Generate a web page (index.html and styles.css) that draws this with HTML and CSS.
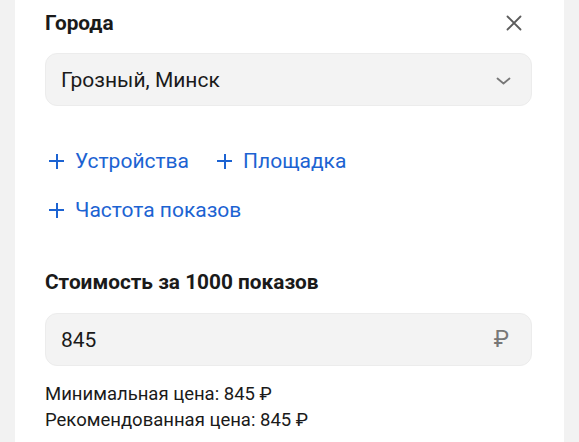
FILE: index.html
```html
<!DOCTYPE html>
<html lang="ru">
<head>
  <meta charset="UTF-8">
  <title>Таргетинг</title>
  <link rel="stylesheet" href="styles.css">
</head>
<body>
  <div class="panel">
    <!-- Cities -->
    <div class="section-head">
      <span class="section-title">Города</span>
      <button class="close-btn" aria-label="Закрыть">
        <svg width="16" height="16" viewBox="0 0 16 16"><path d="M1.5 1.5 L14.5 14.5 M14.5 1.5 L1.5 14.5" stroke="#5c5c5c" stroke-width="1.8" stroke-linecap="round"/></svg>
      </button>
    </div>
    <div class="field">
      <span class="field-value">Грозный, Минск</span>
      <svg class="chevron" width="15" height="8" viewBox="0 0 15 8"><path d="M1.5 1.5 L7.5 6.5 L13.5 1.5" fill="none" stroke="#777" stroke-width="1.8" stroke-linecap="round" stroke-linejoin="round"/></svg>
    </div>

    <!-- Add options -->
    <div class="add-links">
      <div class="add-row">
        <a class="add-link" href="#"><span class="plus"></span>Устройства</a>
        <a class="add-link" href="#"><span class="plus"></span>Площадка</a>
      </div>
      <div class="add-row">
        <a class="add-link" href="#"><span class="plus"></span>Частота показов</a>
      </div>
    </div>

    <!-- Price -->
    <div class="section-head price-head">
      <span class="section-title">Стоимость за 1000 показов</span>
    </div>
    <div class="field">
      <span class="field-value">845</span>
      <span class="currency">₽</span>
    </div>
    <div class="notes">
      <div>Минимальная цена: 845 ₽</div>
      <div>Рекомендованная цена: 845 ₽</div>
    </div>
  </div>
</body>
</html>
```
FILE: styles.css
```css
/* General */
body {
  margin: 0;
  padding: 0;
  background-color: #f2f2f2;
  font-family: Roboto, "Liberation Sans", Arial, sans-serif;
  color: #1a1a1a;
}

.panel {
  margin: 0 15px;
  min-height: 442px;
  box-sizing: border-box;
  background-color: #ffffff;
  padding: 11px 32px 0 30px;
}

/* Section header */
.section-head {
  display: flex;
  justify-content: space-between;
  align-items: center;
  height: 24px;
}

.section-title {
  font-size: 20.8px;
  font-weight: 700;
  line-height: 24px;
}

.close-btn {
  background: none;
  border: none;
  padding: 0;
  margin-right: 10px;
  width: 16px;
  height: 16px;
  display: flex;
  cursor: pointer;
}

/* Input-like field */
.field {
  margin-top: 18px;
  height: 53px;
  box-sizing: border-box;
  background-color: #f3f3f3;
  border: 1px solid #ececec;
  border-radius: 12px;
  display: flex;
  align-items: center;
  justify-content: space-between;
  padding: 0 20px 0 15px;
}

.field-value {
  font-size: 21px;
}

.chevron {
  margin-top: 2px;
}

.currency {
  font-size: 23px;
  color: #777;
  margin-right: 2px;
}

/* Add links */
.add-links {
  margin-top: 43px;
  display: flex;
  flex-direction: column;
  gap: 25px;
}

.add-row {
  display: flex;
  gap: 24px;
}

.add-link {
  display: flex;
  align-items: center;
  line-height: 24px;
  font-size: 21px;
  color: #1c63d2;
  text-decoration: none;
}

.plus {
  position: relative;
  width: 15px;
  height: 15px;
  margin: 0 11px 0 4px;
}

.plus::before,
.plus::after {
  content: "";
  position: absolute;
  background-color: #1c63d2;
}

.plus::before {
  left: 0;
  right: 0;
  top: 6.5px;
  height: 2px;
}

.plus::after {
  top: 0;
  bottom: 0;
  left: 6.5px;
  width: 2px;
}

/* Price */
.price-head {
  margin-top: 48px;
}

.price-head + .field {
  margin-top: 19px;
}

.notes {
  margin-top: 15px;
  font-size: 18.5px;
  line-height: 26px;
}
```
